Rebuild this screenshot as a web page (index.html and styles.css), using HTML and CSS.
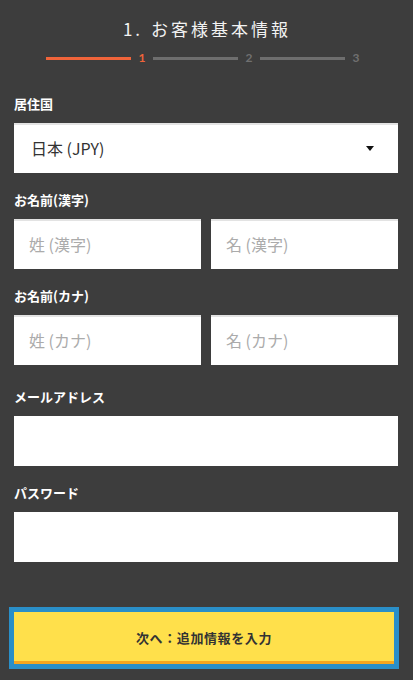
FILE: index.html
```html
<!DOCTYPE html>
<html lang="ja">
<head>
<meta charset="utf-8">
<title>お客様基本情報</title>
<link rel="stylesheet" href="styles.css">
</head>
<body>
<div class="page">
  <header class="head">
    <h1 class="title"><span class="num">1.</span>お客様基本情報</h1>
    <div class="stepper">
      <span class="line active"></span><span class="digit active">1</span>
      <span class="line"></span><span class="digit">2</span>
      <span class="line"></span><span class="digit">3</span>
    </div>
  </header>

  <form class="form">
    <div class="group first">
      <div class="label">居住国</div>
      <div class="field select">
        <span class="value">日本 (JPY)</span>
        <svg class="caret" width="8" height="5" viewBox="0 0 8 5"><path d="M0 0H8L4 5Z" fill="#111"/></svg>
      </div>
    </div>

    <div class="group">
      <div class="label">お名前(漢字)</div>
      <div class="row">
        <div class="field bordered"><span class="ph">姓 (漢字)</span></div>
        <div class="field bordered"><span class="ph">名 (漢字)</span></div>
      </div>
    </div>

    <div class="group">
      <div class="label">お名前(カナ)</div>
      <div class="row">
        <div class="field bordered"><span class="ph">姓 (カナ)</span></div>
        <div class="field bordered"><span class="ph">名 (カナ)</span></div>
      </div>
    </div>

    <div class="group wide-gap">
      <div class="label">メールアドレス</div>
      <div class="field"></div>
    </div>

    <div class="group">
      <div class="label">パスワード</div>
      <div class="field"></div>
    </div>

    <div class="actions">
      <button type="button" class="next">次へ：追加情報を入力</button>
    </div>
  </form>
</div>
</body>
</html>
```

FILE: styles.css
```css
* { box-sizing: border-box; }
html, body {
  margin: 0;
  padding: 0;
  background: #3d3d3d;
}
body {
  font-family: "Noto Sans CJK JP", "Noto Sans", sans-serif;
  color: #fff;
  width: 413px;
  height: 680px;
  overflow: hidden;
}
.page {
  padding: 0 15px 0 14px;
}
.head {
  padding-top: 18px;
}
.title {
  margin: 0;
  font-size: 17px;
  font-weight: 400;
  line-height: 22px;
  letter-spacing: 3px;
  text-align: center;
  color: #f2f2f2;
  padding-left: 2px;
}
.title .num {
  margin-right: 8px;
}
.stepper {
  display: flex;
  align-items: center;
  height: 12px;
  margin-top: 12px;
  padding-left: 32px;
}
.line {
  width: 85px;
  height: 3px;
  background: #6e6e6e;
}
.line.active { background: #f0643a; }
.digit {
  width: 8px;
  margin: 0 7px;
  text-align: center;
  font-family: "Lato", "Noto Sans", sans-serif;
  font-size: 12px;
  font-weight: 700;
  line-height: 12px;
  color: #707070;
}
.digit.active { color: #f0643a; }

.form {
  margin: 0;
}
.group { margin-top: 18px; }
.group.first { margin-top: 31px; }
.group.wide-gap { margin-top: 23px; }
.label {
  font-size: 13px;
  font-weight: 700;
  line-height: 18px;
  color: #fff;
  margin-bottom: 10px;
}
.field {
  height: 50px;
  background: #fff;
  display: flex;
  align-items: center;
  padding: 0 16px 2px 17px;
  font-size: 16px;
  color: #333;
}
.field.bordered {
  border-top: 2px solid #e3e3e3;
  padding-left: 15px;
}
.select {
  border-top: 2px solid #e3e3e3;
  justify-content: space-between;
  padding-right: 24px;
}
.select .value { color: #333; }
.caret { display: block; margin-top: 1px; }
.row {
  display: grid;
  grid-template-columns: 1fr 1fr;
  gap: 10px;
}
.ph { color: #ababab; }

.actions {
  margin-top: 50px;
  padding-right: 4px;
}
.next {
  display: block;
  width: 100%;
  height: 52px;
  border: none;
  border-bottom: 3px solid #f6a61e;
  background: #ffe04b;
  outline: 5px solid #2a8fc8;
  font-family: "Noto Sans CJK JP", "Noto Sans", sans-serif;
  font-size: 13px;
  font-weight: 700;
  letter-spacing: 0.6px;
  color: #333;
  padding: 0;
  padding-top: 2px;
}
```
